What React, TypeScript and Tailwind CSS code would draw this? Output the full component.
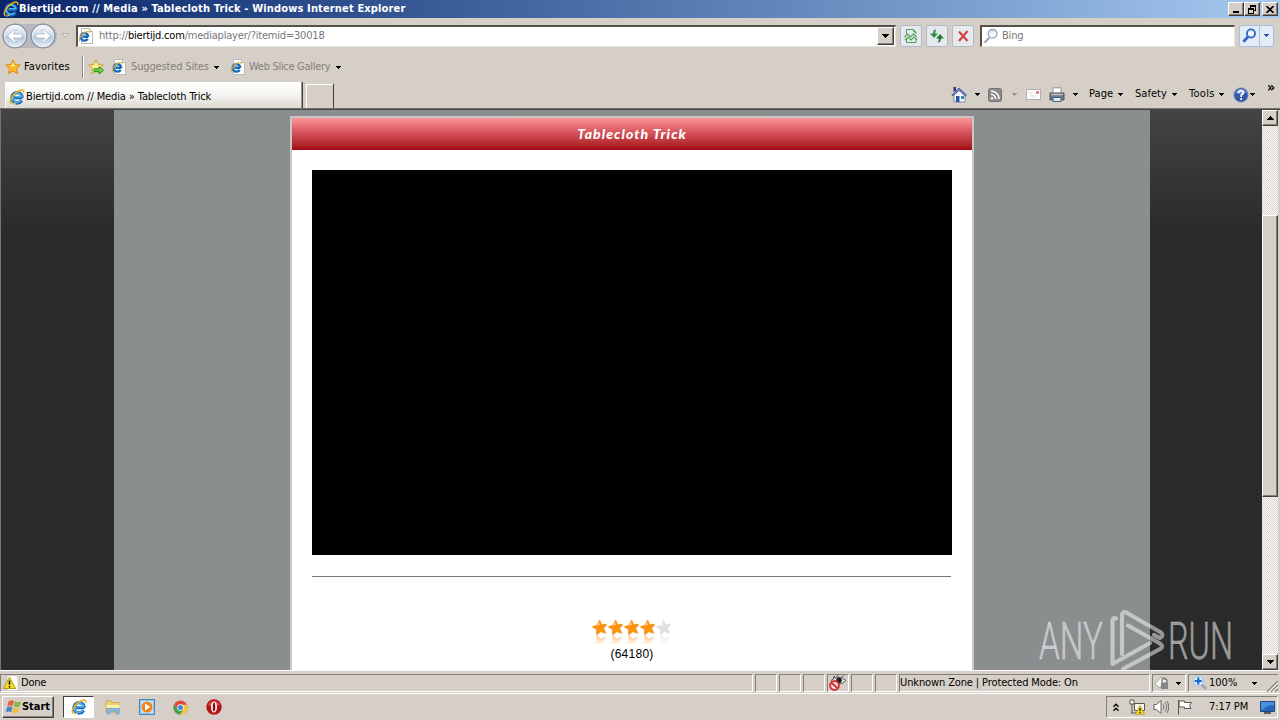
import React from "react";

const Caret = ({ className = "" }: { className?: string }) => (
  <svg className={"h-[3px] w-[5px] shrink-0 " + className} viewBox="0 0 5 3" shapeRendering="crispEdges">
    <path d="M0 0h5v1H4v1H3v1H2V2H1V1H0z" fill="currentColor" />
  </svg>
);

const IE = ({ className = "size-4" }: { className?: string }) => (
  <svg className={"shrink-0 " + className} viewBox="0 0 16 16" fill="none">
    <path d="M13.400 8.600H5.200M13.300 8.600A5.200 5.200 0 1 0 12.600 11.400" stroke="#1565b8" strokeWidth="3.300" />
    <path d="M12.600 7.800H6M12.800 8A4.800 4.800 0 1 0 11.800 11.600" stroke="#4fb8f2" strokeWidth="1.600" />
    <path d="M2.200 14.600C-.6 12.400 3.600 5.400 9 2.500C12.500.6 15.400.3 14.600 3.800" stroke="#e9b01c" strokeWidth="1.500" />
    <path d="M2.600 14.800C4 15.400 5.500 14.600 6.500 14" stroke="#f5d050" strokeWidth="1.100" />
  </svg>
);

const PageIE = () => (
  <svg className="h-4 w-4 shrink-0" viewBox="0 0 16 16" fill="none">
    <path d="M3.500.5h8l3 3v12h-11z" fill="#fff" stroke="#b9b9b5" />
    <path d="M11.500.5v3h3" fill="#e8e8e8" stroke="#b9b9b5" />
    <path d="M10.300 8.700H4.500M10.300 8.700A3.800 3.800 0 1 0 9.700 10.900" stroke="#1668ba" strokeWidth="2.400" />
    <path d="M1.800 13.300C.2 11.500 3.500 6 7 4.300C9.500 3.100 11.800 3 11.300 5.200" stroke="#e8b428" strokeWidth="1.100" />
  </svg>
);

const Star = ({ add = false }: { add?: boolean }) => (
  <svg className="size-4 shrink-0" viewBox="0 0 16 16">
    <path d="M8 .8l2.100 4.700 5.100.5-3.800 3.500 1.100 5.100L8 12l-4.500 2.600 1.100-5.100L.8 6l5.100-.5z" fill={add ? "#ffe98a" : "#ffb91f"} stroke={add ? "#c7a21c" : "#d98209"} strokeWidth=".9" />
    <path d="M8 3l1.300 3.200 3 .4-4.500 1-4-.9 2.900-.5z" fill="#fff0a0" />
    {add && <path d="M6 9.800h5V7.500l4.500 3.700-4.500 3.700v-2.300H6z" fill="#6bd34a" stroke="#268a1d" strokeWidth=".9" />}
  </svg>
);

const Circle = ({ flip = false }: { flip?: boolean }) => (
  <svg className="size-[26px] shrink-0" viewBox="0 0 26 26" fill="none">
    <defs>
      <linearGradient id="orb" x1="0" y1="0" x2="0" y2="1">
        <stop offset="0" stopColor="#f7fafd" />
        <stop offset=".45" stopColor="#d3dde9" />
        <stop offset=".55" stopColor="#b2c6da" />
        <stop offset="1" stopColor="#eaf5fc" />
      </linearGradient>
    </defs>
    <circle cx="13" cy="13" r="11.800" fill="url(#orb)" stroke="#858f9c" strokeWidth="1.200" />
    <circle cx="13" cy="13" r="10.600" stroke="#eef4fa" strokeWidth=".8" />
    <path transform={flip ? "translate(26 0) scale(-1 1)" : undefined} d="M5.500 13l6.500-6h2.800l-3.800 4H20v4h-9l3.800 4H12z" fill="#fff" stroke="#9cacbf" strokeWidth=".6" />
  </svg>
);

const Btn = ({ children }: { children: React.ReactNode }) => (
  <div className="flex h-[22px] w-[22px] shrink-0 items-center justify-center rounded-[2px] border border-[#b4b8c0] bg-[#e6e9ef]">{children}</div>
);

const WinBtn = ({ children, className = "" }: { children: React.ReactNode; className?: string }) => (
  <div className={"flex shrink-0 items-center justify-center border border-t-white border-r-[#404040] border-b-[#404040] border-l-white bg-[#d6cfc7] shadow-[inset_-1px_-1px_0_#848078] " + className}>{children}</div>
);

const Lens = ({ color, className = "", bold = false }: { color: string; className?: string; bold?: boolean }) => (
  <svg className={"size-4 shrink-0 " + className} viewBox="0 0 16 16" fill="none">
    <path d="M6.300 9.700L1.500 14.600" stroke={color} strokeWidth={bold ? 3 : 2} />
    <circle cx="9.600" cy="5.800" r="4.300" fill="#f3f8ff" stroke={color} strokeWidth={bold ? 2 : 1.3} />
    <path d="M7.500 4.500Q9 3 11 3.700" stroke="#c5d7ee" />
  </svg>
);

function TitleBar() {
  return (
    <div className="flex h-[18px] shrink-0 items-center bg-linear-to-r from-[#0a246a] to-[#a6caf0] pr-[2px] pl-[3px]">
      <IE />
      <span className="flex-1 text-[11px] font-bold tracking-[0.150px] text-white">Biertijd.com // Media » Tablecloth Trick - Windows Internet Explorer</span>
      <WinBtn className="h-[14px] w-4">
        <svg className="h-2 w-2" viewBox="0 0 8 8"><path d="M1 6h6v2H1z" /></svg>
      </WinBtn>
      <WinBtn className="mr-[2px] h-[14px] w-4">
        <svg className="h-[9px] w-[9px]" viewBox="0 0 9 9" shapeRendering="crispEdges"><path d="M2 0h6v6H6V5h1V2H3v1H2z" /><path fillRule="evenodd" d="M0 3h6v6H0zM1 5v3h4V5z" /></svg>
      </WinBtn>
      <WinBtn className="h-[14px] w-4">
        <svg className="h-[7px] w-2" viewBox="0 0 8 7"><path d="M.5 0l7 7M7.500 0l-7 7" stroke="#000" strokeWidth="1.600" /></svg>
      </WinBtn>
    </div>
  );
}

function AddressRow() {
  return (
    <div className="flex h-[35px] shrink-0 items-center pl-[2px]">
      <div className="flex h-6 w-[55px] shrink-0 items-center gap-[2px] rounded-full bg-[#b8b8bd]"><Circle /><Circle flip /></div>
      <svg className="ml-[4px] h-[5px] w-[9px] shrink-0" viewBox="0 0 9 5"><path d="M1 .5h7l-3.500 3.800z" fill="#e9e6e1" stroke="#aaa59c" strokeWidth=".8" /></svg>
      <div className="ml-[6px] flex h-[22px] w-[820px] shrink-0 items-center border-t-2 border-l-2 border-t-[#55524e] border-l-[#55524e] border-r border-b border-r-[#e8e4de] border-b-[#e8e4de] bg-white pr-px">
        <PageIE />
        <span className="ml-[5px] flex-1 pt-px text-[11px] tracking-[-0.200px] text-[#777]">http://<span className="text-black">biertijd.com</span>/mediaplayer/?itemid=30018</span>
        <WinBtn className="h-[18px] w-[17px]"><svg className="h-1 w-[7px]" viewBox="0 0 7 4" shapeRendering="crispEdges"><path d="M0 0h7L3.500 4z" /></svg></WinBtn>
      </div>
      <div className="ml-1 flex gap-1">
        <Btn>
          <svg className="size-4" viewBox="0 0 16 16" fill="none" stroke="#4ca451"><path d="M3.500 6V1.500h7l2.500 2.500v2M3.500 10v4.500H13V10M10.500 1.500V4H13" /><path d="M1.500 9l3-3 3 3 3-3 3.500 3M2 12l3-3 3 3 3-3 3 3" strokeWidth="1.100" /></svg>
        </Btn>
        <Btn>
          <svg className="size-4" viewBox="0 0 16 16" fill="#2d8f36"><path d="M7.500 1.500C5 1.500 4 3 4 5.500H1L5 10l4-4.500H6.200c0-1.500.3-2.500 1.300-4z" /><path d="M8.500 14.500C11 14.500 12 13 12 10.500h3L11 6l-4 4.500h2.800c0 1.500-.3 2.500-1.300 4z" fill="#267a2e" /></svg>
        </Btn>
        <Btn>
          <svg className="size-4" viewBox="0 0 16 16"><path d="M4 3.500l8.500 9.500M12.500 3L4 13" stroke="#cc4545" strokeWidth="2.200" /></svg>
        </Btn>
      </div>
      <div className="ml-[6px] flex h-[22px] w-[255px] shrink-0 items-center border-t-2 border-l-2 border-t-[#55524e] border-l-[#55524e] border-r border-b border-r-[#e8e4de] border-b-[#e8e4de] bg-white pl-px">
        <Lens color="#93a0b3" />
        <span className="ml-[3px] pt-px text-[11px] tracking-[-0.200px] text-[#777]">Bing</span>
      </div>
      <div className="ml-1 flex h-[22px] w-[35px] shrink-0 items-center rounded-[2px] border border-[#aebfd9] bg-[#e3ecf9] text-[#2554a5]">
        <Lens color="#2f67c5" className="ml-[2px] !size-[15px]" bold />
        <span className="ml-[2px] h-full w-px bg-[#aebfd9]" />
        <Caret className="ml-[4px]" />
      </div>
    </div>
  );
}

function FavoritesRow() {
  return (
    <div className="flex h-[28px] shrink-0 items-center pl-[5px] text-[11px]">
      <Star />
      <span className="ml-[3px] w-[58px] tracking-[0.130px] whitespace-nowrap">Favorites</span>
      <span className="h-[22px] w-[2px] border-l border-[#8d887f] bg-white" />
      <span className="ml-1"><Star add /></span>
      <span className="ml-[7px]"><PageIE /></span>
      <span className="ml-1 w-[83px] pt-px tracking-[-0.150px] whitespace-nowrap text-[#858079]">Suggested Sites</span>
      <Caret />
      <span className="ml-[11px]"><PageIE /></span>
      <span className="ml-[3px] w-[87px] pt-px tracking-[-0.300px] whitespace-nowrap text-[#858079]">Web Slice Gallery</span>
      <Caret />
    </div>
  );
}

function CommandBar() {
  return (
    <div className="flex h-[27px] items-center pr-px text-[11px]">
      <svg className="size-4 shrink-0" viewBox="0 0 16 16"><path d="M3 7v8h11V7L8.500 2z" fill="#f6f8ff" stroke="#6677a8" strokeWidth=".8" /><path d="M.8 8L8 1l7.500 7-1.200 1L8 3.500 2 9z" fill="#7185bb" stroke="#33478c" strokeWidth=".7" /><path d="M2.500 0h2.500v3.500L2.500 5z" fill="#3c2f80" /><path d="M5 9h3.500v6H5z" fill="#2c549c" /><path d="M10 9h3v3h-3z" fill="#398bb0" /></svg>
      <Caret className="ml-[8px]" />
      <svg className="ml-[8px] size-[14px] shrink-0" viewBox="0 0 14 14"><rect x=".5" y=".5" width="13" height="13" rx="2" fill="#8a8a88" stroke="#737371" /><g fill="none" stroke="#fff" strokeWidth="1.500"><path d="M3 3a8 8 0 0 1 8 8M3 6.300A4.700 4.700 0 0 1 7.700 11" /></g><circle cx="4" cy="10.200" r="1.200" fill="#fff" /></svg>
      <Caret className="ml-[10px] text-[#9a958d]" />
      <svg className="ml-[9px] h-[11px] w-[15px] shrink-0" viewBox="0 0 15 11"><rect x=".5" y=".5" width="14" height="10" fill="#fbfbfb" stroke="#b2adb0" /><path d="M10 2.500h3v2h-3z" fill="#cb5866" /><path d="M2 4h4M4 7h6" stroke="#d9d9df" /></svg>
      <svg className="ml-[8px] size-4 shrink-0" viewBox="0 0 16 16"><path d="M4 .8h8v6H4z" fill="#fff" stroke="#91969e" /><path d="M1 6h14v7H1z" fill="#73787e" stroke="#4f5356" /><path d="M2 7.500h12" stroke="#bcc6d0" strokeWidth="1.500" /><path d="M4 10.500h8v4H4z" fill="#dcecf7" stroke="#416381" /></svg>
      <Caret className="ml-[8px]" />
      <span className="ml-[11px] w-[29px] tracking-[0.100px]">Page</span>
      <Caret />
      <span className="ml-[12px] w-[37px] tracking-[0.050px]">Safety</span>
      <Caret />
      <span className="ml-[12px] w-[30px] tracking-[0.300px]">Tools</span>
      <Caret />
      <svg className="ml-[9px] size-4 shrink-0" viewBox="0 0 16 16"><circle cx="8" cy="8" r="7.300" fill="#3157a7" stroke="#9caad0" /><path d="M2.500 6a6 6 0 0 1 11-.5Q8 8 2.500 6" fill="#7798d8" /><path d="M5.500 6Q5.700 3.500 8.200 3.700 10.500 4 10.300 6 10 7.300 8.200 8v2M8.200 11v2" fill="none" stroke="#fff" strokeWidth="1.700" /></svg>
      <Caret className="ml-px" />
      <span className="ml-[12px] w-[12px] pb-[14px] text-[14px] font-bold">»</span>
    </div>
  );
}

function TabRow() {
  return (
    <div className="flex h-[28px] shrink-0 items-end justify-between border-b border-[#77746f]">
      <div className="flex items-end pl-[5px]">
        <div className="flex h-[26px] w-[296px] items-center border-t border-l border-white bg-linear-to-b from-white via-[#f4f3f0] to-[#dcd8d1] pt-[2px] pl-[3px]">
          <IE />
          <span className="ml-px pt-px text-[11px] tracking-[-0.120px] whitespace-nowrap">Biertijd.com // Media » Tablecloth Trick</span>
        </div>
        <div className="mr-[3px] h-[26px] w-[2px] border-l border-[#9b968e] bg-[#3f3d3a]" />
        <div className="h-6 w-[27px] border-t border-l border-white" />
        <div className="h-6 w-px bg-[#3f3d3a]" />
      </div>
      <CommandBar />
    </div>
  );
}

const starPath = "M8 .5l2.200 4.600 5.100-.2-3.200 4 2.200 4.800-5-1.600-4.200 3.300.200-5.200L.8 7.300l4.900-1.700z";

function Rating() {
  return (
    <svg className="h-[28px] w-[80px]" viewBox="0 0 80 28">
      <defs>
        <linearGradient id="fade" x1="0" y1="0" x2="0" y2="1"><stop offset="0" stopColor="#fff" stopOpacity=".45" /><stop offset=".8" stopColor="#fff" /></linearGradient>
      </defs>
      {[0, 1, 2, 3, 4].map((i) => (
        <g key={i} transform={`translate(${i * 16 - 0.5} 0.5)`}>
          <path d={starPath} fill={i < 4 ? "#fa9210" : "#dfdfdf"} stroke={i < 4 ? "#f69a28" : "#e5e5e5"} strokeWidth="1" />
          <path d="M7.500 2.500l1 3-3.500.8-2 .2 3-1z" fill={i < 4 ? "#ffd19a" : "#f4f4f4"} />
          <path d={starPath} transform="translate(0 31) scale(1 -1)" fill={i < 4 ? "#fa9718" : "#dfdfdf"} />
        </g>
      ))}
      <rect y="16.500" width="80" height="11.500" fill="url(#fade)" />
    </svg>
  );
}

function Scrollbar() {
  return (
    <div className="flex w-[16px] shrink-0 flex-col bg-[conic-gradient(#ffffff_25%,#d6cfc7_0_50%,#ffffff_0_75%,#d6cfc7_0)] bg-size-[2px_2px]">
      <WinBtn className="h-4 w-4"><svg className="h-1 w-[7px]" viewBox="0 0 7 4" shapeRendering="crispEdges"><path d="M3.500 0L7 4H0z" /></svg></WinBtn>
      <WinBtn className="mt-[89px] h-[282px] w-4">{null}</WinBtn>
      <div className="flex-1" />
      <WinBtn className="h-4 w-4"><svg className="h-1 w-[7px]" viewBox="0 0 7 4" shapeRendering="crispEdges"><path d="M0 0h7L3.500 4z" /></svg></WinBtn>
    </div>
  );
}

function Content() {
  return (
    <div className="flex h-[561px] shrink-0 border-t border-l border-t-[#45433f] border-l-[#77746f] pr-[2px]">
      <div className="flex flex-1 justify-center bg-linear-to-b from-[#444444] to-[#2b2b2b] to-[120px] pl-px">
        <div className="flex h-full w-[1036px] justify-center bg-[#8a8e8f] pt-[6px]">
          <div className="flex w-[684px] flex-col items-center border-x-2 border-t-2 border-[#c9c6c5] bg-white">
            <div className="flex h-8 w-full shrink-0 items-center justify-center bg-linear-to-b from-[#fb9598] via-[#d6535b] via-45% to-[#a20613]">
              <span className="pb-[2px] font-['Lato','Open_Sans',sans-serif] text-[14px] font-black tracking-[1.050px] text-white italic">Tablecloth Trick</span>
            </div>
            <div className="mt-5 h-[385px] w-[640px] shrink-0 bg-black" />
            <div className="mt-[21px] mr-px h-px w-[639px] shrink-0 bg-[#777]" />
            <div className="mt-[42px] h-[28px] shrink-0"><Rating /></div>
            <span className="font-['Liberation_Sans',sans-serif] text-[12px] leading-[14px] tracking-[0.250px]">(64180)</span>
          </div>
        </div>
      </div>
      <Scrollbar />
    </div>
  );
}

const Cell = ({ className = "", children }: { className?: string; children?: React.ReactNode }) => (
  <div className={"flex h-[18px] shrink-0 items-center border-t border-l border-t-[#848078] border-l-[#848078] border-r border-b border-r-white border-b-white " + className}>{children}</div>
);

function StatusBar() {
  return (
    <div className="flex h-[23px] shrink-0 items-end gap-[2px] border-t border-white pb-px text-[11px]">
      <Cell className="w-[753px] pl-[2px]">
        <svg className="size-4" viewBox="0 0 16 16"><path d="M4 .5h9l2 2v13H4z" fill="#fff" stroke="#bbb" strokeWidth=".7" /><path d="M6.500 2l6 11.500H.5z" fill="#f7df25" stroke="#b79a10" /><path d="M6.500 5.500v4.200M6.500 11v1.500" stroke="#111" strokeWidth="1.500" /></svg>
        <span className="ml-[2px] pt-px tracking-[-0.200px]">Done</span>
      </Cell>
      <Cell className="w-[22px]" />
      <Cell className="w-[22px]" />
      <Cell className="w-[22px]" />
      <Cell className="w-[22px]">
        <svg className="h-4 w-[19px] shrink-0" viewBox="0 0 19 16" fill="none"><path d="M3 5.500Q10-1 18 5.500 11 12 4 7z" fill="#eee" stroke="#555" /><circle cx="11" cy="5.300" r="2.800" fill="#222" /><path d="M5 3l2-2M9 1.500l1-1.300M14 2l1.500-1.200" stroke="#333" /><circle cx="6.500" cy="10.500" r="4.400" fill="#fbe2e2" stroke="#cf3434" strokeWidth="2" /><path d="M3.400 7.700l6.200 5.600" stroke="#cf3434" strokeWidth="2" /></svg>
      </Cell>
      <Cell className="w-[22px]" />
      <Cell className="w-[22px]" />
      <Cell className="w-[251px]"><span className="pt-px tracking-[-0.120px] whitespace-nowrap">Unknown Zone | Protected Mode: On</span></Cell>
      <Cell className="w-[34px] pl-px">
        <svg className="size-4" viewBox="0 0 16 16"><path d="M1 9l5-6 4-1 3 5-4 1-3 5z" fill="#f4f4f4" stroke="#aaa" /><path d="M8 8V6a2.500 2.500 0 0 1 5 0v2" fill="none" stroke="#777" strokeWidth="1.300" /><path d="M7 8h7v6H7z" fill="#858585" /></svg>
        <Caret className="ml-[6px]" />
      </Cell>
      <Cell className="w-[90px] !border-r-0 pl-[3px]">
        <svg className="size-4 shrink-0" viewBox="0 0 16 16"><path d="M9 9l5 5" stroke="#9ca5b0" strokeWidth="2.600" /><circle cx="6.300" cy="6" r="5" fill="#d9ecfc" stroke="#9fc0df" /><path d="M6.300 2.500v7M2.800 6h7" stroke="#1b6cc5" strokeWidth="2.200" /></svg>
        <span className="w-[45px] pt-px pl-px">100%</span>
        <Caret />
        <svg className="mt-[5px] ml-[9px] h-3 w-3 shrink-0" viewBox="0 0 12 12"><path d="M1 12L12 1M5 12l7-7M9 12l3-3" stroke="#858078" strokeWidth="1.400" /><path d="M2.500 12L12 2.500M6.500 12L12 6.500" stroke="#fff" /></svg>
      </Cell>
    </div>
  );
}

function Taskbar() {
  return (
    <div className="flex h-[26px] shrink-0 items-center border-t border-white pt-px pr-[2px] pl-[2px]">
      <WinBtn className="h-[22px] w-[52px]">
        <svg className="size-4 shrink-0" viewBox="0 0 16 16"><path d="M2.500 2.500Q5 .5 8 2L6.800 7Q4 5.800 1.300 7.300z" fill="#e7653c" /><path d="M9 2.500Q12 4 15 2.300L13.700 7.500Q11 9 7.800 7.400z" fill="#83b84c" /><path d="M1 8.300Q4 6.900 6.500 8.200L5.200 13Q2.700 11.800 0 13.200z" fill="#4382ca" /><path d="M7.500 8.600Q10.500 10.300 13.400 8.600L12 13.600Q9 15 6.300 13.500z" fill="#f4bd3f" /></svg>
        <span className="pt-px text-[11px] font-bold">Start</span>
      </WinBtn>
      <div className="ml-[9px] flex h-[22px] w-[31px] shrink-0 items-center justify-center border border-t-[#404040] border-r-white border-b-white border-l-[#404040] bg-white"><IE /></div>
      <div className="ml-[11px] flex flex-1 items-center gap-[18px]">
        <svg className="size-4" viewBox="0 0 16 16"><path d="M1 2h5l1 1.500h7V13H1z" fill="#eed372" stroke="#cfaa3d" /><path d="M1.500 6h13v3h-13z" fill="#fbf0b1" /><path d="M2 9.500h12V15h-3v-3H5v3H2z" fill="#83bde2" stroke="#5b9bc6" strokeWidth=".7" /></svg>
        <svg className="size-4" viewBox="0 0 16 16"><rect x=".5" y=".5" width="15" height="15" fill="#8fc4eb" stroke="#4a86bc" /><rect x="2" y="2" width="12" height="12" fill="#c6e2f7" /><circle cx="8" cy="8" r="5.500" fill="#f08319" /><path d="M6 4.500v7L11.500 8z" fill="#fff" /></svg>
        <svg className="size-[15px]" viewBox="0 0 16 16"><circle cx="8" cy="8" r="7.500" fill="#e04a3c" /><path d="M1.200 4.900A7.500 7.500 0 0 0 7.500 15.500L11 9.500 4.500 9z" fill="#3ca552" /><path d="M15 5H8l3.200 5L7.500 15.500A7.500 7.500 0 0 0 15 5" fill="#f6cb34" /><circle cx="8" cy="8" r="3.500" fill="#fff" /><circle cx="8" cy="8" r="2.700" fill="#4383df" /></svg>
        <svg className="size-4" viewBox="0 0 16 16"><circle cx="8" cy="8" r="7.700" fill="#b51418" /><path d="M2 6a6.500 6.500 0 0 1 12 0Q8 8 2 6" fill="#d9494c" /><ellipse cx="8" cy="8" rx="3" ry="5.500" fill="#fff" /><ellipse cx="8" cy="8" rx="1.300" ry="4.500" fill="#8e0c10" /></svg>
      </div>
      <Cell className="!h-[22px] w-[172px] pl-[6px]">
        <svg className="h-[9px] w-[6px]" viewBox="0 0 6 9" fill="none" stroke="#000" strokeWidth="1.300"><path d="M.5 3.700L3 1.200l2.500 2.500M.5 7.700L3 5.200l2.500 2.500" /></svg>
        <svg className="ml-[10px] size-4" viewBox="0 0 16 16"><path d="M5.500 4.500h10v7h-10z" fill="#f5f5f2" stroke="#555" /><path d="M1 1h4v4H1zM3 5v9M2 14h7" fill="#fff" stroke="#555" /><path d="M11 6.500l4.500 8.700h-9z" fill="#ffe01c" stroke="#ae920b" strokeWidth=".7" /><path d="M11 9v3.200M11 13v1.200" stroke="#000" strokeWidth="1.200" /></svg>
        <svg className="ml-[8px] size-4" viewBox="0 0 16 16" fill="none" stroke="#666"><path d="M1 5.500h2.500L8 1.500v13l-4.500-4H1z" fill="#fff" /><path d="M10 5.500q2 2.500 0 5M12 3.500q3.500 4.500 0 9M14 2q3.500 6 0 12" strokeWidth=".9" /></svg>
        <svg className="ml-[8px] size-4" viewBox="0 0 16 16" fill="none" stroke="#555"><path d="M1.500 1v14.500M2 2h5.500v1.500H14.500L12.500 6.500l1.500 3H7.500V8H2z" fill="#fff" /></svg>
        <span className="ml-4 w-[51px] pt-px text-[11px] tracking-[-0.100px] whitespace-nowrap">7:17 PM</span>
        <svg className="h-[13px] w-[15px] shrink-0" viewBox="0 0 15 13"><path d="M.5.5h14v10H.5z" fill="#2667bd" stroke="#23477d" /><path d="M1 1h13v3Q7 4 2 9H1z" fill="#4b8fdf" /><path d="M4 12h7" stroke="#334" strokeWidth="1.500" /></svg>
      </Cell>
    </div>
  );
}

function Watermark() {
  return (
    <svg className="pointer-events-none absolute top-[604px] left-[1034px] h-[76px] w-[220px] overflow-visible" viewBox="0 0 220 76">
      <g fill="#fff" fillOpacity=".5" fontFamily="Roboto, sans-serif" fontSize="52" fontWeight="300" stroke="#fff" strokeOpacity=".3" strokeWidth=".8">
        <text x="5" y="55" textLength="64" lengthAdjust="spacingAndGlyphs">ANY</text>
        <text x="134" y="55" textLength="65" lengthAdjust="spacingAndGlyphs">RUN</text>
      </g>
      <path d="M82 14.500Q78.500 13 78.500 17V60L116 39M88 50V12Q88 6.500 93 9L127 28.500Q130.500 31.500 126 34L120 31M94 21.500L126 39.500Q130 42.500 126 45L89 65" fill="none" stroke="#fff" strokeOpacity=".5" strokeWidth="4.200" strokeLinejoin="round" strokeLinecap="round" />
    </svg>
  );
}

export default function App() {
  return (
    <div className="relative flex h-[720px] w-[1280px] flex-col overflow-hidden bg-[#d6cfc7] font-['DejaVu_Sans_Condensed','DejaVu_Sans',sans-serif] text-black">
      <TitleBar />
      <AddressRow />
      <FavoritesRow />
      <TabRow />
      <Content />
      <StatusBar />
      <Taskbar />
      <Watermark />
    </div>
  );
}
